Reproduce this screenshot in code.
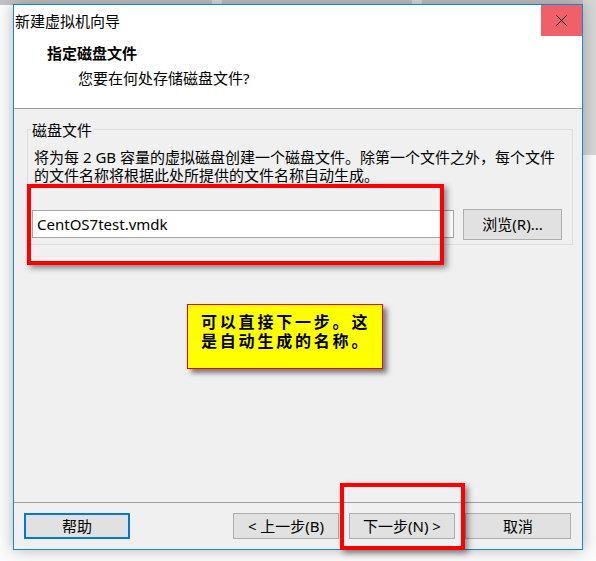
import { useState } from "react";

function WinButton ({ label, focused })
{
    return (
        <button
            className = {`h-[26px] w-[106px] flex items-center justify-center bg-[#e1e1e1] text-[15px] leading-none text-black
            ${focused ? "border-2 border-[#0078d7]" : "border border-[#adadad]"}`}
        >
            {label}
        </button>
    );
}

function App ()
{
    const [fileName, setFileName] = useState("CentOS7test.vmdk");

    return (
        <div className = "relative w-[596px] h-[561px] overflow-hidden bg-[#fbfbfb] font-['Noto_Sans','Noto_Sans_CJK_SC',sans-serif] text-black">
            {/* desktop behind the window */}
            <div className = "absolute left-0 top-0 w-[596px] h-[5px] flex bg-[#c2c2c2]">
                <div className = "w-[212px]" />
                <div className = "w-[10px] bg-[#dedede]" />
                <div className = "w-[190px]" />
                <div className = "w-[10px] bg-[#dedede]" />
            </div>
            <div className = "absolute right-0 top-0 w-[13px] h-[155px] bg-[#d6d6d6]" />

            {/* Dialog window */}
            <div className = "absolute left-[13px] top-[4px] w-[570px] h-[546px] border border-[#1883d7] bg-[#f0f0f0] flex flex-col shadow-[0_0_14px_rgba(0,0,0,0.28)]">
                {/* Title bar */}
                <div className = "h-[31px] flex flex-row items-center justify-between bg-white">
                    <span className = "pl-[1px] text-[15px] leading-[20px]">新建虚拟机向导</span>
                    <div className = "w-[41px] h-[31px] bg-[#f0606b] flex items-center justify-center">
                        <svg width = "11" height = "11" viewBox = "0 0 11 11">
                            <path d = "M0.5 0.5 L10.5 10.5 M10.5 0.5 L0.5 10.5" stroke = "#000" strokeWidth = "1" />
                        </svg>
                    </div>
                </div>

                {/* Header */}
                <div className = "h-[72px] bg-white flex flex-col pt-[7px]">
                    <p className = "pl-[33px] text-[15px] leading-[20px] font-bold">指定磁盘文件</p>
                    <p className = "pl-[64px] mt-[5px] text-[15px] leading-[20px]">您要在何处存储磁盘文件?</p>
                </div>
                <div className = "h-px bg-[#a0a0a0]" />

                {/* Content */}
                <div className = "h-[393px] relative pt-[20px]">
                    <div className = "relative ml-[13px] w-[546px] border border-[#dcdcdc] pt-[18px] pb-[4px]">
                        <span className = "absolute top-[-10px] left-[3px] px-[1px] bg-[#f0f0f0] text-[15px] leading-[20px]">磁盘文件</span>
                        <p className = "pl-[6px] text-[15px] leading-[18px] whitespace-nowrap">
                            将为每 2 GB 容量的虚拟磁盘创建一个磁盘文件。除第一个文件之外，每个文件<br />
                            的文件名称将根据此处所提供的文件名称自动生成。
                        </p>
                        <div className = "mt-[25px] flex flex-row items-start">
                            <input
                                value = {fileName}
                                onChange = {(e) => setFileName(e.target.value)}
                                className = "ml-[4px] mt-[1px] w-[422px] h-[28px] border border-[#a5a5a5] bg-white pl-[4px] text-[15px] outline-none"
                            />
                            <button className = "ml-[9px] w-[99px] h-[31px] bg-[#e1e1e1] border border-[#adadad] text-[15px] leading-none">
                                浏览(R)...
                            </button>
                        </div>
                    </div>

                    {/* note */}
                    <div className = "absolute left-[173px] top-[195px] w-[196px] h-[65px] border border-[#ff0000] bg-[#ffff00] pt-[7px] pl-[13px] shadow-[4px_4px_5px_rgba(0,0,0,0.5)]">
                        <p className = "text-[16px] leading-[19px] font-bold tracking-[2.8px] whitespace-nowrap font-['Noto_Sans_CJK_SC',sans-serif]">
                            可以直接下一步。这<br />
                            是自动生成的名称。
                        </p>
                    </div>
                </div>
                <div className = "h-px bg-[#a0a0a0]" />

                {/* Footer */}
                <div className = "flex-1 flex flex-row items-start pt-[10px] pl-[10px] pr-[11px]">
                    <WinButton label = "帮助" focused />
                    <div className = "flex-1" />
                    <div className = "flex flex-row gap-[10px]">
                        <WinButton label = "< 上一步(B)" />
                        <WinButton label = "下一步(N) >" />
                        <WinButton label = "取消" />
                    </div>
                </div>
            </div>

            {/* red highlight boxes */}
            <div className = "absolute left-[27px] top-[184px] w-[417px] h-[81px] border-4 border-[#ff0000] shadow-[3px_3px_6px_rgba(0,0,0,0.45)]" />
            <div className = "absolute left-[340px] top-[483px] w-[125px] h-[67px] border-4 border-[#ff0000] shadow-[3px_3px_6px_rgba(0,0,0,0.45)]" />
        </div>
    );
}

export default App;
